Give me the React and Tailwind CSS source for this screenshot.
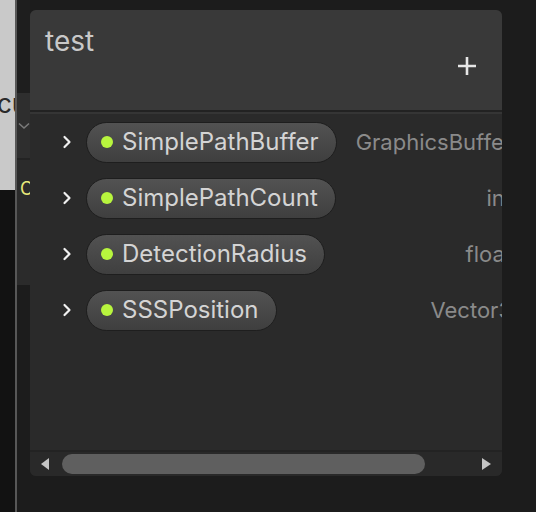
import React from 'react';

const fields = [
  { name: 'SimplePathBuffer', type: 'GraphicsBuffer' },
  { name: 'SimplePathCount', type: 'int' },
  { name: 'DetectionRadius', type: 'float' },
  { name: 'SSSPosition', type: 'Vector3' },
];

function Chevron() {
  return (
    <svg width="10" height="14" viewBox="0 0 10 14" className="shrink-0">
      <path d="M2.5 2 L7.5 7 L2.5 12" fill="none" stroke="#f0f0f0" strokeWidth="2.2" strokeLinecap="round" strokeLinejoin="round" />
    </svg>
  );
}

function FieldRow({ field }) {
  return (
    <div className="h-[56px] w-[482px] flex items-center">
      {/* expand toggle */}
      <div className="w-[56px] flex justify-end pr-[14px]">
        <Chevron />
      </div>
      {/* pill */}
      <div className="h-[41px] flex items-center pl-[14px] pr-[17px] rounded-full border border-[#1e1e1e] bg-gradient-to-b from-[#525252] to-[#3f3f3f]">
        <span className="w-[12px] h-[12px] rounded-full bg-[#b8f53e] mr-[9px]" />
        <span className="text-[24px] text-[#d4d4d4] leading-none">{field.name}</span>
      </div>
      {/* type */}
      <div className="flex-1 text-right text-[22px] text-[#8a8a8a] leading-none whitespace-nowrap">{field.type}</div>
    </div>
  );
}

export default function App() {
  return (
    <div
      className="w-[536px] h-[512px] bg-[#1c1c1c] flex overflow-hidden"
      style={{ fontFamily: 'Inter, "Noto Sans", sans-serif' }}
    >
      {/* left edge: neighbouring window */}
      <div className="w-[15px] flex flex-col shrink-0">
        <div className="h-[190px] bg-[#c9c9c9] overflow-hidden pt-[91px]">
          <div className="ml-[-3px] text-[26px] leading-none text-[#2a2a2a] whitespace-nowrap">cu</div>
        </div>
        <div className="flex-1 bg-[#121212]" />
      </div>
      <div className="w-[2px] bg-[#575757] shrink-0" />
      <div className="w-[13px] flex flex-col shrink-0">
        <div className="h-[93px] bg-[#1e1e1e]" />
        <div className="h-[65px] bg-[#2e2e2e] pt-[29px] pl-[1px]">
          <svg width="12" height="8" viewBox="0 0 12 8">
            <path d="M1 1.5 L6 6 L11 1.5" fill="none" stroke="#7a7a7a" strokeWidth="1.6" />
          </svg>
        </div>
        <div className="h-[2px] bg-[#232323]" />
        <div className="h-[125px] bg-[#2b2b2b] pt-[20px] pl-[3px]">
          <div className="text-[18px] leading-none text-[#e8e87a] whitespace-nowrap">C</div>
        </div>
        <div className="flex-1 bg-[#1c1c1c]" />
      </div>

      {/* blackboard panel */}
      <div className="pt-[10px] shrink-0">
        <div className="w-[472px] h-[466px] rounded-[6px] overflow-hidden flex flex-col bg-[#2a2a2a]">
          {/* header */}
          <div className="h-[100px] bg-[#393939] relative px-[15px] pt-[17px]">
            <div className="text-[28px] leading-none text-[#c8c8c8]">test</div>
            <svg width="20" height="20" viewBox="0 0 20 20" className="absolute right-[25px] top-[46px]">
              <path d="M10 1 V19 M1 10 H19" stroke="#e6e6e6" strokeWidth="2.6" />
            </svg>
          </div>
          <div className="h-[2px] bg-[#222222]" />
          <div className="h-[2px] bg-[#353535]" />

          {/* fields */}
          <div className="flex-1 bg-[#2a2a2a] overflow-hidden">
            {fields.map((f) => (
              <FieldRow key={f.name} field={f} />
            ))}
          </div>

          {/* horizontal scrollbar */}
          <div className="h-[2px] bg-[#232323]" />
          <div className="h-[24px] bg-[#292929] flex items-center px-[11px] gap-[13px]">
            <svg width="8" height="12" viewBox="0 0 8 12" className="shrink-0">
              <path d="M8 0 L0 6 L8 12 Z" fill="#c4c4c4" />
            </svg>
            <div className="w-[363px] h-[20px] rounded-full bg-[#5f5f5f]" />
            <div className="flex-1" />
            <svg width="9" height="12" viewBox="0 0 9 12" className="shrink-0">
              <path d="M0 0 L9 6 L0 12 Z" fill="#c4c4c4" />
            </svg>
          </div>
        </div>
      </div>
      <div className="flex-1" />
    </div>
  );
}
